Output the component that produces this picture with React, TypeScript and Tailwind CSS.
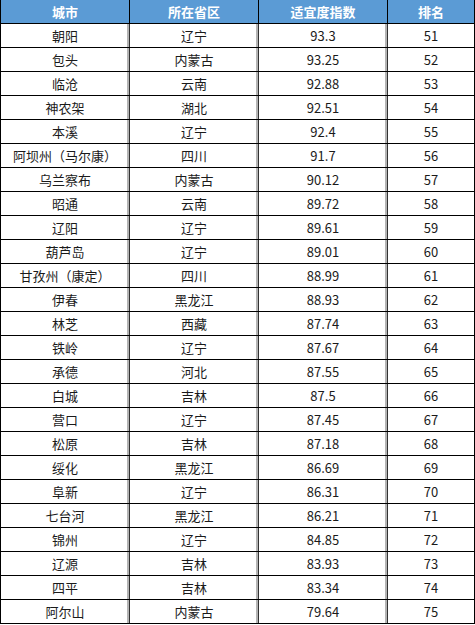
const rows: [string, string, string, number][] = [
  ['朝阳', '辽宁', '93.3', 51],
  ['包头', '内蒙古', '93.25', 52],
  ['临沧', '云南', '92.88', 53],
  ['神农架', '湖北', '92.51', 54],
  ['本溪', '辽宁', '92.4', 55],
  ['阿坝州（马尔康）', '四川', '91.7', 56],
  ['乌兰察布', '内蒙古', '90.12', 57],
  ['昭通', '云南', '89.72', 58],
  ['辽阳', '辽宁', '89.61', 59],
  ['葫芦岛', '辽宁', '89.01', 60],
  ['甘孜州（康定）', '四川', '88.99', 61],
  ['伊春', '黑龙江', '88.93', 62],
  ['林芝', '西藏', '87.74', 63],
  ['铁岭', '辽宁', '87.67', 64],
  ['承德', '河北', '87.55', 65],
  ['白城', '吉林', '87.5', 66],
  ['营口', '辽宁', '87.45', 67],
  ['松原', '吉林', '87.18', 68],
  ['绥化', '黑龙江', '86.69', 69],
  ['阜新', '辽宁', '86.31', 70],
  ['七台河', '黑龙江', '86.21', 71],
  ['锦州', '辽宁', '84.85', 72],
  ['辽源', '吉林', '83.93', 73],
  ['四平', '吉林', '83.34', 74],
  ['阿尔山', '内蒙古', '79.64', 75],
]

const font = { fontFamily: '"Noto Sans CJK SC", "Noto Sans", sans-serif' }

export default function App() {
  return (
    <div className="w-[475px] h-[625px] bg-white text-[13px]" style={font}>
      <div className="grid grid-cols-[129px_129px_129px_88px] h-[24px] bg-[#5b9bd5] border-b border-black font-bold text-white leading-[23px] text-center">
        <div className="border-l border-black">城市</div>
        <div className="border-l border-black">所在省区</div>
        <div className="border-l border-black">适宜度指数</div>
        <div className="border-l border-r border-black">排名</div>
      </div>
      {rows.map(([city, prov, score, rank]) => (
        <div
          key={city}
          className="grid grid-cols-[129px_129px_129px_88px] h-[24px] border-b border-black text-[#1a1a1a] leading-[23px] text-center"
        >
          <div className="border-l border-black shadow-[inset_-2px_0_0_#b4b4b4] whitespace-nowrap">{city}</div>
          <div className="border-l border-[#333] shadow-[inset_-2px_0_0_#b4b4b4]">{prov}</div>
          <div className="border-l border-[#333] shadow-[inset_-2px_0_0_#b4b4b4]">{score}</div>
          <div className="border-l border-r border-[#333] border-r-black">{rank}</div>
        </div>
      ))}
    </div>
  )
}
